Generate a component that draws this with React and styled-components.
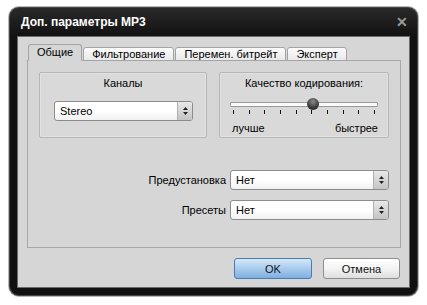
import styled, { createGlobalStyle } from 'styled-components';

const Global = createGlobalStyle`
  body {
    margin: 0;
    background: #ffffff;
    font-family: "Liberation Sans", Arial, sans-serif;
    font-size: 11px;
    color: #000;
  }
`;

const Window = styled.div`
  margin: 6px 0 0 8px;
  width: 411px;
  height: 291px;
  box-sizing: border-box;
  border: 1px solid #b8b8b8;
  border-radius: 11px;
  background: linear-gradient(#2a2a2a, #111 30px, #111);
  box-shadow: inset 0 0 0 1px #444;
  display: flex;
  flex-direction: column;
  overflow: hidden;
`;

const TitleBar = styled.div`
  height: 29px;
  flex: none;
  display: flex;
  align-items: center;
  justify-content: space-between;
  padding: 0 10px 0 12px;
  color: #fff;
  font-weight: bold;
  font-size: 12px;
`;

const Close = styled.span`
  color: #9a9a9a;
  font-weight: bold;
  font-size: 14px;
  line-height: 1;
`;

const Body = styled.div`
  flex: 1;
  margin: 0 8px 8px 8px;
  border: 1px solid #6b6b6b;
  background: #d6d6d6;
  padding: 7px 8px 0 9px;
  display: flex;
  flex-direction: column;
`;

const TabBar = styled.div`
  display: flex;
  align-items: flex-end;
  padding-left: 1px;
  height: 17px;
  margin-bottom: -1px;
  position: relative;
  z-index: 1;
`;

const Tab = styled.div`
  box-sizing: border-box;
  height: ${(p) => (p.$active ? '17px' : '14px')};
  padding: 0 8px ${(p) => (p.$active ? '1px' : '0')};
  margin-right: 1px;
  display: flex;
  align-items: center;
  border: 1px solid #a4a4a4;
  border-bottom: ${(p) => (p.$active ? '1px solid #d6d6d6' : '1px solid #a4a4a4')};
  border-radius: 3px 3px 0 0;
  background: ${(p) => (p.$active ? '#d6d6d6' : 'linear-gradient(#fbfbfb, #e9e9e9)')};
  white-space: nowrap;
  line-height: 1;
`;

const Panel = styled.div`
  height: 188px;
  box-sizing: border-box;
  border: 1px solid #a8a8a8;
  background: #d6d6d6;
  padding: 11px 11px 0 11px;
  display: flex;
  flex-direction: column;
`;

const GroupRow = styled.div`
  display: flex;
  gap: 12px;
`;

const Group = styled.div`
  box-sizing: border-box;
  width: ${(p) => p.$w}px;
  height: 66px;
  border: 1px solid #b6b6b6;
  border-radius: 2px;
  background: #d9d9d9;
  box-shadow: inset 0 0 0 1px #e2e2e2;
  padding: 3px ${(p) => p.$px}px 0;
  display: flex;
  flex-direction: column;
`;

const GroupLabel = styled.div`
  text-align: center;
  line-height: 15px;
`;

const SelectBox = styled.div`
  box-sizing: border-box;
  width: ${(p) => p.$w}px;
  height: 20px;
  border: 1px solid #8c8c8c;
  border-radius: 3px;
  background: linear-gradient(#ffffff, #ffffff 50%, #f1f1f1);
  display: flex;
  align-items: center;
  overflow: hidden;
`;

const SelectText = styled.span`
  flex: 1;
  padding-left: 5px;
  font-size: 11px;
`;

const Spin = styled.span`
  width: 14px;
  height: 100%;
  border-left: 1px solid #b0b0b0;
  background: linear-gradient(#e8e8e8, #c4c4c4);
  display: flex;
  align-items: center;
  justify-content: center;
`;

const Select = ({ value, w }) => (
  <SelectBox $w={w}>
    <SelectText>{value}</SelectText>
    <Spin>
      <svg width="7" height="10" viewBox="0 0 7 10">
        <path d="M3.5 1 L6 4 L1 4 Z M1 6 L6 6 L3.5 9 Z" fill="#222" />
      </svg>
    </Spin>
  </SelectBox>
);

const ChannelSelect = styled.div`
  margin-top: 10px;
`;

const SliderArea = styled.div`
  margin-top: 9px;
  position: relative;
  height: 14px;
`;

const Track = styled.div`
  position: absolute;
  left: 0;
  right: 0;
  top: 2px;
  height: 3px;
  background: #fafafa;
  border: 1px solid #9a9a9a;
  border-radius: 1px;
`;

const Thumb = styled.div`
  position: absolute;
  left: 77px;
  top: -2px;
  width: 12px;
  height: 12px;
  border-radius: 50%;
  background: radial-gradient(circle at 50% 30%, #8a8a8a, #3a3a3a 60%, #1a1a1a);
`;

const Ticks = styled.div`
  display: flex;
  justify-content: space-between;
  padding: 0 3px 0 3px;
  margin-top: -4px;
`;

const Tick = styled.span`
  width: 1px;
  height: 4px;
  background: #111;
`;

const Ends = styled.div`
  display: flex;
  justify-content: space-between;
  margin-top: 7px;
  padding-left: 2px;
  line-height: 14px;
`;

const Form = styled.div`
  margin-top: 32px;
  display: grid;
  grid-template-columns: 187px 159px;
  column-gap: 4px;
  row-gap: 10px;
  align-items: center;
`;

const FormLabel = styled.span`
  text-align: right;
`;

const Buttons = styled.div`
  display: flex;
  justify-content: flex-end;
  gap: 11px;
  margin-top: 10px;
  padding-right: 1px;
`;

const Button = styled.div`
  box-sizing: border-box;
  width: ${(p) => (p.$primary ? 78 : 77)}px;
  height: 21px;
  display: flex;
  align-items: center;
  justify-content: center;
  border-radius: 3px;
  border: 1px solid ${(p) => (p.$primary ? '#4a7cb4' : '#8e8e8e')};
  background: ${(p) =>
    p.$primary
      ? 'linear-gradient(#d6e8fa, #a9cbee 50%, #7fafe0)'
      : 'linear-gradient(#ffffff, #f4f4f4 50%, #dedede)'};
  color: #111;
  font-size: 11px;
`;

export default function App() {
  return (
    <>
      <Global />
      <Window>
        <TitleBar>
          <span>Доп. параметры MP3</span>
          <Close>✕</Close>
        </TitleBar>
        <Body>
          <TabBar>
            <Tab $active>Общие</Tab>
            <Tab>Фильтрование</Tab>
            <Tab>Перемен. битрейт</Tab>
            <Tab>Эксперт</Tab>
          </TabBar>
          <Panel>
            <GroupRow>
              <Group $w={168} $px={14}>
                <GroupLabel>Каналы</GroupLabel>
                <ChannelSelect>
                  <Select value="Stereo" w={139} />
                </ChannelSelect>
              </Group>
              <Group $w={171} $px={10}>
                <GroupLabel>Качество кодирования:</GroupLabel>
                <SliderArea>
                  <Track />
                  <Thumb />
                </SliderArea>
                <Ticks>
                  {Array.from({ length: 10 }).map((_, i) => (
                    <Tick key={i} />
                  ))}
                </Ticks>
                <Ends>
                  <span>лучше</span>
                  <span>быстрее</span>
                </Ends>
              </Group>
            </GroupRow>
            <Form>
              <FormLabel>Предустановка</FormLabel>
              <Select value="Нет" w={159} />
              <FormLabel>Пресеты</FormLabel>
              <Select value="Нет" w={159} />
            </Form>
          </Panel>
          <Buttons>
            <Button $primary>OK</Button>
            <Button>Отмена</Button>
          </Buttons>
        </Body>
      </Window>
    </>
  );
}
